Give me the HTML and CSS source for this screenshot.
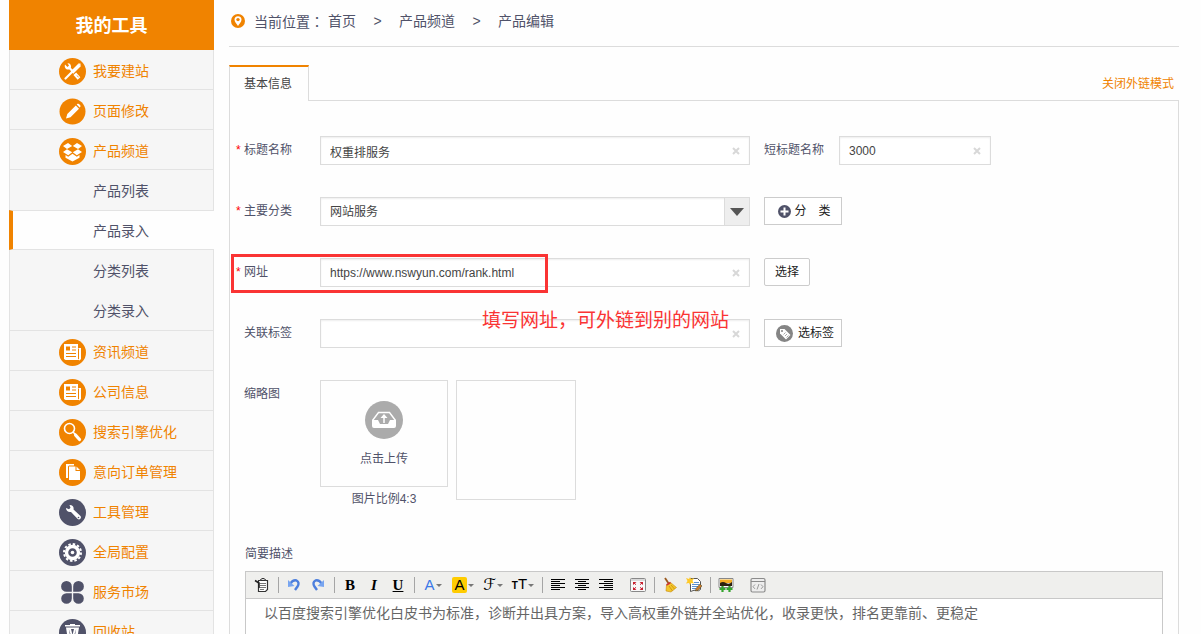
FILE: index.html
```html
<!DOCTYPE html>
<html lang="zh-CN">
<head>
<meta charset="utf-8">
<title>产品编辑</title>
<link rel="stylesheet" href="styles.css">
</head>
<body>
<div class="page">
  <nav class="sidebar">
    <h1 class="sidebar-title">我的工具</h1>
    <a class="item" href="#"><svg class="icon" viewBox="0 0 27 27"><circle cx="13.500" cy="13.500" r="13.500" fill="#f08300"/><path d="M6.500 20.500 14 13" stroke="#fff" stroke-width="2.200" stroke-linecap="round"/><path d="M13 14.500 20.500 7" stroke="#fff" stroke-width="3.600"/><path d="M19 5.500h2.500v3z" fill="#fff"/><path d="M6 6.500c-1 3 1 5.500 4 5l2-2c.5-2.500-1-4.500-3.500-4.300L10 7.500 8.500 9z" fill="#fff"/><path d="m10.500 10 3 3" stroke="#fff" stroke-width="2.200"/><path d="m15.800 15.800 4.200 4.700" stroke="#fff" stroke-width="3.600"/><path d="m18 17.500 1.500 1.800" stroke="#f08300" stroke-width=".8"/></svg>我要建站</a>
    <a class="item" href="#"><svg class="icon" viewBox="0 0 27 27"><circle cx="13.500" cy="13.500" r="13" fill="#f08300"/><path d="m7 20.500 1.300-4.500 8.500-8.500 3.200 3.200-8.500 8.500zM17.700 6.600l.8-.8c1-.8 3.700 1.600 2.900 2.900l-.8.800z" fill="#fff"/></svg>页面修改</a>
    <a class="item" href="#"><svg class="icon" viewBox="0 0 27 27"><circle cx="13.500" cy="13.500" r="13.500" fill="#f08300"/><path d="m9 5 4.200 3-5.200 3-4-3zM18 5l-4.200 3 5.200 3 4-3zM4 14l4-2.700 5.200 3-4 3zM23 14l-4-2.700-5.200 3 4 3z" fill="#fff"/><path d="m6.500 17 2.700 1.700 4.300-3 4.300 3 2.700-1.700v2.800l-7 3.700-7-3.700z" fill="#fff"/></svg>产品频道</a>
    <div class="submenu">
      <a class="sub" href="#">产品列表</a>
      <a class="sub sub-active" href="#" aria-current="page">产品录入</a>
      <a class="sub" href="#">分类列表</a>
      <a class="sub" href="#">分类录入</a>
    </div>
    <a class="item" href="#"><svg class="icon" viewBox="0 0 27 27"><circle cx="13.500" cy="13.500" r="13.500" fill="#f08300"/><path d="M5 5h14v16H6.500L5 20zM19.500 9H22v11l-1.500 1.500-1.500-1z" fill="#fff"/><path d="M7 7.500h4v4H7z" fill="#f08300"/><path d="M13 8h4M13 11h4M7 14.500h10M7 17.500h10M19.500 10v10" stroke="#f08300"/></svg>资讯频道</a>
    <a class="item" href="#"><svg class="icon" viewBox="0 0 27 27"><circle cx="13.500" cy="13.500" r="13.500" fill="#f08300"/><path d="M5 5h14v16H6.500L5 20zM19.500 9H22v11l-1.500 1.500-1.500-1z" fill="#fff"/><path d="M7 7.500h4v4H7z" fill="#f08300"/><path d="M13 8h4M13 11h4M7 14.500h10M7 17.500h10M19.500 10v10" stroke="#f08300"/></svg>公司信息</a>
    <a class="item" href="#"><svg class="icon" viewBox="0 0 27 27"><circle cx="13.500" cy="13.500" r="13.500" fill="#f08300"/><circle cx="10.500" cy="9.500" r="5" fill="none" stroke="#fff" stroke-width="1.600"/><path d="m14 13 2.500 2.500" stroke="#fff" stroke-width="1.500"/><path d="m16.500 16 4 4.500" stroke="#fff" stroke-width="3.200" stroke-linecap="round"/></svg>搜索引擎优化</a>
    <a class="item" href="#"><svg class="icon" viewBox="0 0 27 27"><circle cx="13.500" cy="13.500" r="13.500" fill="#f08300"/><path d="M7 5h8v1.500h-5L9 7.500V19H7z" fill="#fff"/><path d="M10 7.500h6.500v4.500H21v9H10zM17.500 7.500l3.500 3.500h-3.500z" fill="#fff"/></svg>意向订单管理</a>
    <a class="item" href="#"><svg class="icon" viewBox="0 0 27 27"><circle cx="13.500" cy="13.500" r="13.500" fill="#505269"/><path d="m7 9 3 1.300 1.500-1.500L10.500 6c3-.2 4.600 2 4 4.500l7 6.500c1.500 1.800-.8 4.500-2.800 3l-6.700-7C9.500 13.500 7 12 7 9z" fill="#fff"/><circle cx="19.500" cy="18.500" r=".8" fill="#505269"/></svg>工具管理</a>
    <a class="item" href="#"><svg class="icon" viewBox="0 0 27 27"><circle cx="13.500" cy="13.500" r="13.500" fill="#505269"/><circle cx="13.500" cy="13.500" r="8.500" fill="none" stroke="#fff" stroke-width="2" stroke-dasharray="2.450 2"/><circle cx="13.500" cy="13.500" r="6" fill="none" stroke="#fff" stroke-width="3.400"/><circle cx="13.500" cy="13.500" r="1.800" fill="#fff"/></svg>全局配置</a>
    <a class="item" href="#"><svg class="icon" viewBox="0 0 27 27"><path d="M7.500 2a5.300 5.300 0 0 1 5.300 5.500v5.300H7.500A5.300 5.300 0 0 1 7.500 2zM19.500 2a5.300 5.300 0 0 1 0 10.800h-5.300V7.500A5.300 5.300 0 0 1 19.500 2zM2.200 19.500a5.300 5.300 0 0 1 5.300-5.300h5.300v5.300a5.300 5.300 0 0 1-10.600 0zM14.200 14.200h5.300a5.300 5.300 0 1 1-5.300 5.300z" fill="#505269"/></svg>服务市场</a>
    <a class="item" href="#"><svg class="icon" viewBox="0 0 27 27"><circle cx="13.500" cy="13.500" r="13.500" fill="#505269"/><path d="M6 6.800h15M11 5.800h5" stroke="#fff" stroke-width="1.600"/><path d="m7 8.500 2 12.500h9l2-12.500z" fill="#fff"/><path d="m9.800 10 3 9h-1.300zM17.200 10l-3 9h1.300zM12 10h3l-1.500 6z" fill="#505269"/></svg>回收站</a>
  </nav>

  <main class="main">
    <div class="crumbs">
      <svg class="pin" viewBox="0 0 14 14"><circle cx="7" cy="7" r="7" fill="#f08300"/><path d="M7 12C5.500 9.500 3.500 8 3.500 5.700a3.500 3.500 0 0 1 7 0C10.500 8 8.500 9.500 7 12z" fill="#fff"/><circle cx="7" cy="5.600" r="1.700" fill="#f08300"/></svg>
      <span class="crumb-label">当前位置<span class="colon" lang="zh-TW">：</span></span>
      <a href="#">首页</a><span class="gt">&gt;</span><a href="#">产品频道</a><span class="gt">&gt;</span><span>产品编辑</span>
    </div>

    <div class="tabs">
      <button class="tab" type="button">基本信息</button>
      <a class="mode" href="#">关闭外链模式</a>
    </div>

    <form class="panel">
      <div class="row">
        <label class="label" for="title"><span class="star">*</span>标题名称</label>
        <div class="field"><input class="input" id="title" type="text" value="权重排服务"><button class="clear" type="button" aria-label="清除"><svg viewBox="0 0 8 8"><path d="m1 1 6 6M7 1 1 7" stroke="#d8d8d8" stroke-width="2"/></svg></button></div>
        <label class="label-short" for="short">短标题名称</label>
        <div class="field field-short"><input class="input" id="short" type="text" value="3000"><button class="clear" type="button" aria-label="清除"><svg viewBox="0 0 8 8"><path d="m1 1 6 6M7 1 1 7" stroke="#d8d8d8" stroke-width="2"/></svg></button></div>
      </div>
      <div class="row">
        <label class="label" for="cat"><span class="star">*</span>主要分类</label>
        <div class="field"><select class="input" id="cat"><option>网站服务</option></select><span class="arrow"><svg viewBox="0 0 14 8"><path d="M0 0h14L7 8z" fill="#555"/></svg></span></div>
        <button class="btn btn-wide btn-add" type="button"><svg class="plus" viewBox="0 0 13 13"><circle cx="6.500" cy="6.500" r="6.500" fill="#505269"/><path d="M6.500 2.500v8M2.500 6.500h8" stroke="#fff" stroke-width="2"/></svg><span>分　类</span></button>
      </div>
      <div class="row row-marked">
        <label class="label" for="url"><span class="star">*</span>网址</label>
        <div class="field"><input class="input" id="url" type="text" value="https://www.nswyun.com/rank.html"><button class="clear" type="button" aria-label="清除"><svg viewBox="0 0 8 8"><path d="m1 1 6 6M7 1 1 7" stroke="#d8d8d8" stroke-width="2"/></svg></button></div>
        <button class="btn btn-round" type="button">选择</button>
        <div class="mark"></div>
        <div class="note">填写网址，可外链到别的网站</div>
      </div>
      <div class="row">
        <label class="label" for="tags"><span class="star"></span>关联标签</label>
        <div class="field"><input class="input" id="tags" type="text"><button class="clear" type="button" aria-label="清除"><svg viewBox="0 0 8 8"><path d="m1 1 6 6M7 1 1 7" stroke="#d8d8d8" stroke-width="2"/></svg></button></div>
        <button class="btn btn-wide btn-tag" type="button"><svg class="tag" viewBox="0 0 17 17"><circle cx="8.500" cy="8.500" r="8.500" fill="#858585"/><path d="M4 4h4.500l6 6-4.500 4.500-6-6z" fill="#fff"/><circle cx="6" cy="6" r="1" fill="#858585"/><path d="m7.500 9.500 2-2M9 11l2-2M10.500 12.500l2-2" stroke="#858585" stroke-width=".7"/></svg><span>选标签</span></button>
      </div>
      <div class="row row-thumb">
        <span class="label"><span class="star"></span>缩略图</span>
        <div class="upload">
          <button class="upload-box" type="button"><svg class="upload-icon" viewBox="0 0 38 38"><circle cx="19" cy="19" r="19" fill="#ababab"/><path d="m7.500 19.500 6-8h11l6 8" fill="none" stroke="#fff" stroke-width="1.400"/><path d="M7 19h6l2 4h8l2-4h6v6q0 2-2 2H9q-2 0-2-2z" fill="#fff"/><path d="M19 22v-6" stroke="#fff" stroke-width="1.500"/><path d="m15.500 17 3.500-4 3.500 4z" fill="#fff"/></svg><span>点击上传</span></button>
          <span class="ratio">图片比例4:3</span>
        </div>
        <div class="preview"></div>
      </div>
      <div class="desc">
        <label class="desc-label" for="desc">简要描述</label>
        <div class="editor">
          <div class="toolbar">
            <button class="tool" type="button" aria-label="粘贴"><svg viewBox="0 0 16 16"><path d="M4.500 3.500h9v9l-2 2h-7z" fill="#fff" stroke="#333" stroke-width="1.200"/><path d="M6.500 3.500v-1q2.500-2.500 5 0v1z" fill="#ddd" stroke="#333"/><path d="M6 6.500h6M6 8.500h6M6 10.500h6M6 12.500h4" stroke="#777"/><path d="M1 3.500 5 6v5" fill="none" stroke="#222" stroke-width="1.600"/></svg></button>
            <i class="sep"></i>
            <button class="tool" type="button" aria-label="撤销"><svg viewBox="0 0 16 16"><path d="M4 7q3-4.500 6.500-3.500Q14 5.500 11.500 9.500L9 13" fill="none" stroke="#4d7fdd" stroke-width="2.400"/><path d="M2 3v7l6.500-1z" fill="#78a5f0"/></svg></button>
            <button class="tool" type="button" aria-label="重做"><svg viewBox="0 0 16 16"><path d="M12 7Q9 2.500 5.500 3.500 2 5.500 4.500 9.500L7 13" fill="none" stroke="#4d7fdd" stroke-width="2.400"/><path d="M14 3v7L7.500 9z" fill="#78a5f0"/></svg></button>
            <i class="sep"></i>
            <button class="tool serif" type="button">B</button>
            <button class="tool serif italic" type="button">I</button>
            <button class="tool serif under" type="button">U</button>
            <i class="sep"></i>
            <button class="tool drop blue" type="button"><span>A</span><i class="tri"></i></button>
            <button class="tool drop" type="button"><span class="hilite">A</span><i class="tri"></i></button>
            <button class="tool drop" type="button"><span class="script">ℱ</span><i class="tri"></i></button>
            <button class="tool drop" type="button"><span class="size"><b>T</b>T</span><i class="tri"></i></button>
            <i class="sep"></i>
            <button class="tool" type="button" aria-label="左对齐"><svg viewBox="0 0 16 16"><path d="M1 2.500h14M1 4.500h9M1 6.500h14M1 8.500h9M1 10.500h14M1 12.500h9" stroke="#000"/></svg></button>
            <button class="tool" type="button" aria-label="居中"><svg viewBox="0 0 16 16"><path d="M1 2.500h14M4 4.500h8M1 6.500h14M4 8.500h8M1 10.500h14M4 12.500h8" stroke="#000"/></svg></button>
            <button class="tool" type="button" aria-label="右对齐"><svg viewBox="0 0 16 16"><path d="M1 2.500h14M6 4.500h9M1 6.500h14M6 8.500h9M1 10.500h14M6 12.500h9" stroke="#000"/></svg></button>
            <i class="gap"></i>
            <button class="tool" type="button" aria-label="全屏"><svg viewBox="0 0 16 16"><rect x=".5" y="1.500" width="15" height="13" rx="1" fill="#f8f8f8" stroke="#888"/><path d="M1 3h14" stroke="#bbb"/><path d="M3 5h3.500L3 8zM13 5H9.500L13 8zM3 13h3.500L3 10zM13 13H9.500L13 10z" fill="#c8202f"/><path d="m4 6 2 1.700M12 6l-2 1.700M4 12l2-1.700M12 12l-2-1.700" stroke="#c8202f"/></svg></button>
            <i class="sep"></i>
            <button class="tool" type="button" aria-label="清除格式"><svg viewBox="0 0 16 16"><path d="M3 1 7 7" stroke="#9a5a20" stroke-width="1.800"/><path d="m4.500 8 4-2.500 6 5-5.500 4.500-5-1z" fill="#f3c62b" stroke="#c98d10" stroke-width=".6"/><path d="m4.500 8 4-2.500" stroke="#c33" stroke-width="1.500"/><path d="m7 9 3.500 5M9 8l3.500 4" stroke="#c98d10" stroke-width=".8"/></svg></button>
            <button class="tool" type="button" aria-label="自动排版"><svg viewBox="0 0 16 16"><path d="M4.500 1.500h7l3 3v8q-2 2-4 1t-6 1z" fill="#fff" stroke="#555"/><path d="M8 5.500h5M6 7.500h7M6 9.500h6M6 11.500h4" stroke="#5b8fd0"/><path d="M0 1l3 1 1-2 1 2 3-1-1.500 3L8 6.500 5 6 4 8 3 6 0 6.500 1.500 4z" fill="#ffc928"/><path d="m9.500 14 .5-2.500L14 7l2 2-4 4.500z" fill="#c9792b" stroke="#553" stroke-width=".6"/></svg></button>
            <i class="sep"></i>
            <button class="tool" type="button" aria-label="图片"><svg viewBox="0 0 16 16"><path d="M1 1.500h14v9H1z" fill="#fff" stroke="#888"/><path d="M2 2.500h12V6H2z" fill="#f5ae24"/><path d="M2 6q3-2 6 0t6-1v4H2z" fill="#2c2110"/><path d="M4.500 9v6M1.500 12h6M11.500 9v6M8.500 12h6" stroke="#35a52f" stroke-width="2.200"/></svg></button>
            <i class="gap"></i>
            <button class="tool" type="button" aria-label="源代码"><svg viewBox="0 0 16 16"><rect x="1" y="1.500" width="14" height="13.500" rx="1.500" fill="#ededed" stroke="#8b8b8b" stroke-width="1.200"/><path d="M1 4.500h14" stroke="#8b8b8b"/><path d="m5 7.500-2 2.200 2 2.200M11 7.500l2 2.200-2 2.200M9 7l-2 5.500" fill="none" stroke="#999"/></svg></button>
          </div>
          <textarea class="text" id="desc">以百度搜索引擎优化白皮书为标准，诊断并出具方案，导入高权重外链并全站优化，收录更快，排名更靠前、更稳定</textarea>
        </div>
      </div>
    </form>
  </main>
</div>
</body>
</html>
```

FILE: styles.css
```css
* { box-sizing: border-box; }

body {
  margin: 0;
  height: 100vh;
  overflow: hidden;
  background: #fefefe;
  color: #505269;
  font: 12px/18px "Liberation Sans", "Noto Sans CJK SC", sans-serif;
}

a { color: inherit; text-decoration: none; }
button, input, select, textarea { font: inherit; color: inherit; }
button { padding: 0; border: 0; background: none; }
svg { display: block; fill: none; flex: none; }

.page {
  display: flex;
  align-items: flex-start;
  gap: 15px;
  padding: 0 22px 0 9px;
}

/* Sidebar */
.sidebar {
  flex: none;
  width: 205px;
  background: #f6f6f6;
  font-size: 14px;
}
.sidebar-title {
  margin: 0;
  background: #f08300;
  color: #fff;
  font-size: 18px;
  line-height: 52px;
  height: 50px;
  text-align: center;
}
.item, .sub {
  display: flex;
  align-items: center;
  height: 40px;
  border: solid #e3e3e3;
  border-width: 0 1px;
}
.item {
  gap: 7px;
  padding: 3px 0 0 49px;
  border-bottom-width: 1px;
  color: #f08300;
}
.icon { width: 27px; height: 27px; }
.submenu { border-bottom: 1px solid #e3e3e3; }
.sub { padding: 2px 0 0 83px; }
.sub-active {
  padding-left: 80px;
  border-width: 1px 0;
  border-left: 4px solid #f08300;
  background: #fefefe;
}

/* Main column */
.main { flex: 1; min-width: 0; }
.crumbs {
  display: flex;
  align-items: center;
  height: 47px;
  padding: 0 0 4px 2px;
  border-bottom: 1px solid #dcdcdc;
  font-size: 14px;
}
.pin { width: 14px; height: 14px; margin-right: 9px; }
.crumb-label { margin-right: 4px; }
.colon { font-family: "Noto Sans CJK TC", sans-serif; line-height: 18px; }
.gt { width: 43px; text-align: center; }

.tabs {
  display: flex;
  justify-content: space-between;
  align-items: center;
  margin-top: 18px;
}
.tab {
  position: relative;
  width: 80px;
  height: 36px;
  margin-bottom: -1px;
  padding-right: 2px;
  border: 1px solid #dcdcdc;
  border-top: 2px solid #f08300;
  border-bottom: 0;
  background: #fefefe;
  color: #444;
}
.mode { padding: 2px 5px 0 0; color: #f08300; }

.panel {
  padding: 35px 15px 0 6px;
  border: 1px solid #dcdcdc;
  border-bottom: 0;
}
.row {
  position: relative;
  display: flex;
  align-items: flex-start;
  gap: 14px;
  height: 29px;
  margin-bottom: 32px;
}
.row-marked { z-index: 1; }
.label {
  display: flex;
  flex: none;
  width: 70px;
  padding-top: 5px;
  white-space: nowrap;
}
.star { width: 8px; color: #f00; }
.field { position: relative; width: 430px; }
.field-short { width: 152px; }
.input {
  display: block;
  width: 100%;
  height: 29px;
  padding: 1px 30px 0 9px;
  border: 1px solid #dcdcdc;
  border-radius: 0;
  background: #fff;
  box-shadow: inset 0 1px 2px #eee;
  color: #444;
  appearance: none;
}
.clear {
  position: absolute;
  top: 11px;
  right: 10px;
  width: 8px;
  height: 8px;
}
.arrow {
  position: absolute;
  top: 1px;
  right: 1px;
  bottom: 1px;
  display: flex;
  align-items: center;
  justify-content: center;
  width: 25px;
  border-left: 1px solid #dcdcdc;
  background: #eee;
  pointer-events: none;
}
.arrow svg { width: 14px; height: 8px; }
.label-short { padding-top: 5px; margin-right: 1px; }
.btn {
  display: flex;
  align-items: center;
  justify-content: center;
  gap: 4px;
  height: 28px;
  padding: 0 10px;
  border: 1px solid #ccc;
  background: #fff;
  color: #222;
  line-height: 26px;
}
.btn-wide { width: 78px; }
.btn-round { width: 46px; border-radius: 2px; }
.btn-add { gap: 3px; padding: 0 8px 0 11px; }
.btn-tag { gap: 5px; padding: 0 6px 0 10px; }
.plus { width: 13px; height: 13px; }
.tag { width: 17px; height: 17px; }

.mark {
  position: absolute;
  top: -4px;
  left: -5px;
  width: 317px;
  height: 39px;
  border: 3px solid #fa3434;
  pointer-events: none;
}
.note {
  position: absolute;
  top: 49px;
  left: 246px;
  color: #fa3434;
  font-size: 19px;
  line-height: 28px;
  white-space: nowrap;
  pointer-events: none;
}

.row-thumb { gap: 8px; height: auto; margin-bottom: 27px; }
.row-thumb .label { width: 76px; }
.upload { display: flex; flex-direction: column; align-items: center; }
.upload-box {
  display: flex;
  flex-direction: column;
  align-items: center;
  gap: 11px;
  width: 128px;
  height: 107px;
  padding-top: 20px;
  border: 1px solid #dcdcdc;
}
.upload-icon { width: 38px; height: 38px; }
.ratio { padding-top: 3px; }
.preview { width: 120px; height: 120px; border: 1px solid #dcdcdc; }

/* Rich text editor */
.desc { padding-left: 9px; }
.desc-label { display: block; padding: 10px 0 8px; }
.editor { border: 1px solid #c8c8c8; background: #fff; }
.toolbar {
  display: flex;
  align-items: center;
  height: 27px;
  padding-left: 4px;
  border-bottom: 1px solid #c8c8c8;
  background: #efefed;
}
.tool {
  display: flex;
  align-items: center;
  justify-content: center;
  width: 24px;
  height: 24px;
  color: #000;
}
.tool svg { width: 16px; height: 16px; }
.sep, .gap { width: 8px; height: 16px; }
.sep { background: linear-gradient(#a5a5a5, #a5a5a5) center / 1px 16px no-repeat; }
.serif { font: bold 15px/20px "Liberation Serif", serif; }
.italic { font-style: italic; }
.under { text-decoration: underline; }
.drop { width: 30px; gap: 1px; font-size: 15px; }
.blue span { color: #3a78e8; }
.hilite { width: 15px; background: #fc0; border-radius: 2px; line-height: 16px; }
.script { font: italic 16px/18px "DejaVu Serif", "DejaVu Sans", serif; }
.size b { font-size: 10px; }
.tri { border: 3px solid transparent; border-top-color: #777; border-bottom: 0; }
.text {
  display: block;
  width: 100%;
  height: 120px;
  padding: 4px 18px;
  border: 0;
  outline: 0;
  resize: none;
  background: transparent;
  color: #666;
  font-size: 14px;
  line-height: 20px;
}
```
